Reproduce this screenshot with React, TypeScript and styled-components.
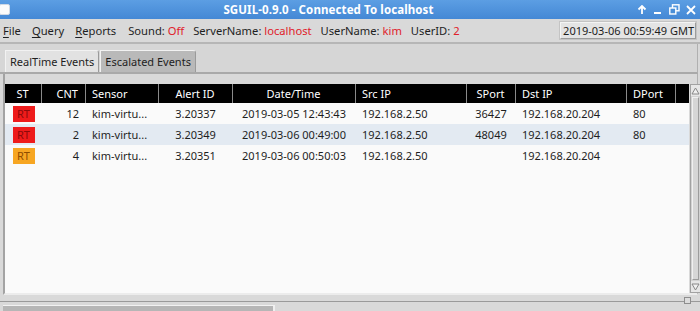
import React from "react";
import styled, { createGlobalStyle } from "styled-components";

const GlobalStyle = createGlobalStyle`
  html, body {
    margin: 0;
    padding: 0;
    background: #d9d9d9;
  }
  * {
    box-sizing: border-box;
  }
`;

interface EventRow {
  status: "red" | "orange";
  cnt: number;
  sensor: string;
  alertId: string;
  date: string;
  srcIp: string;
  sport: string;
  dstIp: string;
  dport: string;
}

const rows: EventRow[] = [
  {
    status: "red",
    cnt: 12,
    sensor: "kim-virtu...",
    alertId: "3.20337",
    date: "2019-03-05 12:43:43",
    srcIp: "192.168.2.50",
    sport: "36427",
    dstIp: "192.168.20.204",
    dport: "80",
  },
  {
    status: "red",
    cnt: 2,
    sensor: "kim-virtu...",
    alertId: "3.20349",
    date: "2019-03-06 00:49:00",
    srcIp: "192.168.2.50",
    sport: "48049",
    dstIp: "192.168.20.204",
    dport: "80",
  },
  {
    status: "orange",
    cnt: 4,
    sensor: "kim-virtu...",
    alertId: "3.20351",
    date: "2019-03-06 00:50:03",
    srcIp: "192.168.2.50",
    sport: "",
    dstIp: "192.168.20.204",
    dport: "",
  },
];

const COLS = "37px 44px 73px 74px 123px 111px 49px 111px 49px 1fr";

const App: React.FC = () => {
  return (
    <>
      <GlobalStyle />
      <Window>
        <TitleBar>
          <WinMenuIcon />
          <Title>SGUIL-0.9.0 - Connected To localhost</Title>
          <Controls>
            <svg width="10" height="10" viewBox="0 0 10 10">
              <path d="M5 1 L5 9 M1.5 4.5 L5 1 L8.5 4.5" stroke="#fff" strokeWidth="1.8" fill="none" />
            </svg>
            <svg width="10" height="10" viewBox="0 0 10 10">
              <rect x="1" y="7" width="7" height="2" fill="#fff" />
            </svg>
            <svg width="11" height="11" viewBox="0 0 11 11">
              <rect x="3.5" y="0.8" width="6.5" height="6" stroke="#fff" strokeWidth="1.4" fill="none" />
              <rect x="0.8" y="4" width="6" height="6" stroke="#fff" strokeWidth="1.4" fill="#4a8fd8" />
            </svg>
            <svg width="10" height="10" viewBox="0 0 10 10">
              <path d="M1 1 L9 9 M9 1 L1 9" stroke="#fff" strokeWidth="1.8" />
            </svg>
          </Controls>
        </TitleBar>

        <MenuBar>
          <MenuItem>
            <u>F</u>ile
          </MenuItem>
          <MenuItem>
            <u>Q</u>uery
          </MenuItem>
          <MenuItem>
            <u>R</u>eports
          </MenuItem>
          <Info>
            Sound: <Red>Off</Red>
          </Info>
          <Info>
            ServerName: <Red>localhost</Red>
          </Info>
          <Info>
            UserName: <Red>kim</Red>
          </Info>
          <Info>
            UserID: <Red>2</Red>
          </Info>
          <Clock>2019-03-06 00:59:49 GMT</Clock>
        </MenuBar>

        <TabBar>
          <Tab $active>RealTime Events</Tab>
          <Tab>Escalated Events</Tab>
        </TabBar>

        <Pane>
          <TableBox>
            <HeaderRow>
              <HeadCell $align="center">ST</HeadCell>
              <HeadCell $align="right">CNT</HeadCell>
              <HeadCell>Sensor</HeadCell>
              <HeadCell $align="center">Alert ID</HeadCell>
              <HeadCell $align="center">Date/Time</HeadCell>
              <HeadCell>Src IP</HeadCell>
              <HeadCell $align="center">SPort</HeadCell>
              <HeadCell>Dst IP</HeadCell>
              <HeadCell>DPort</HeadCell>
              <HeadCell $last />
            </HeaderRow>
            {rows.map((r, i) => (
              <DataRow key={r.alertId} $alt={i % 2 === 1}>
                <Cell $align="center">
                  <Badge $status={r.status}>RT</Badge>
                </Cell>
                <Cell $align="right">{r.cnt}</Cell>
                <Cell>{r.sensor}</Cell>
                <Cell $align="center">{r.alertId}</Cell>
                <Cell $align="center">{r.date}</Cell>
                <Cell>{r.srcIp}</Cell>
                <Cell $align="center">{r.sport}</Cell>
                <Cell>{r.dstIp}</Cell>
                <Cell>{r.dport}</Cell>
                <Cell />
              </DataRow>
            ))}
          </TableBox>
          <ScrollBar>
            <ScrollArrow>
              <svg width="9" height="8" viewBox="0 0 9 8">
                <path d="M4.5 1 L8 7 L1 7 Z" stroke="#888" fill="#f0f0f0" strokeWidth="1" />
              </svg>
            </ScrollArrow>
            <ScrollThumb />
            <ScrollArrow>
              <svg width="9" height="8" viewBox="0 0 9 8">
                <path d="M4.5 7 L8 1 L1 1 Z" stroke="#888" fill="#f0f0f0" strokeWidth="1" />
              </svg>
            </ScrollArrow>
          </ScrollBar>
        </Pane>

        <Sash>
          <SashHandle />
        </Sash>
        <BottomStrip>
          <BottomBar />
        </BottomStrip>
      </Window>
    </>
  );
};

const Window = styled.div`
  width: 700px;
  height: 311px;
  overflow: hidden;
  background: #d9d9d9;
  font-family: "Noto Sans", "DejaVu Sans", sans-serif;
  font-size: 11px;
  color: #1e1e1e;
  display: flex;
  flex-direction: column;
`;

const TitleBar = styled.div`
  height: 19px;
  flex: none;
  display: flex;
  align-items: center;
  background: linear-gradient(#5c9ee3, #4488d5);
  color: #fff;
`;

const WinMenuIcon = styled.div`
  width: 11px;
  height: 11px;
  margin-left: -1px;
  background: #fbfbfb;
  border: 1px solid #cfd8e4;
  border-radius: 2px;
`;

const Title = styled.div`
  flex: 1;
  text-align: center;
  font-weight: 700;
  font-size: 11.5px;
  letter-spacing: 0.1px;
  padding-left: 10px;
`;

const Controls = styled.div`
  display: flex;
  align-items: center;
  gap: 6px;
  padding-right: 4px;
`;

const MenuBar = styled.div`
  height: 25px;
  flex: none;
  display: flex;
  align-items: center;
  padding-left: 3px;
  border-bottom: 2px solid #b6b6b6;
  font-size: 11.2px;
`;

const MenuItem = styled.span`
  margin-right: 11px;
  u {
    text-decoration-thickness: 1px;
    text-underline-offset: 2px;
  }
`;

const Info = styled.span`
  margin-left: 1px;
  margin-right: 8px;
`;

const Red = styled.span`
  color: #e0202a;
`;

const Clock = styled.div`
  margin-left: auto;
  margin-right: 4px;
  height: 17px;
  padding: 0 1px 0 2px;
  display: flex;
  align-items: center;
  background: #e4e4e4;
  border: 1px solid #9c9c9c;
  border-top-color: #f4f4f4;
  border-left-color: #f4f4f4;
  box-shadow: 0 0 0 1px #c4c4c4;
  font-size: 11px;
`;

const TabBar = styled.div`
  height: 30px;
  flex: none;
  display: flex;
  align-items: flex-end;
  padding-left: 5px;
  margin-right: 2px;
  border-right: 1px solid #b0b0b0;
  border-bottom: 2px solid #a9a9a9;
  background: #d6d6d6;
`;

const Tab = styled.div<{ $active?: boolean }>`
  height: 22px;
  display: flex;
  align-items: center;
  padding: 0 4px;
  margin-right: 1px;
  background: ${(p) => (p.$active ? "#e2e2e2" : "#b9b9b9")};
  border: 1px solid #9a9a9a;
  border-bottom: none;
  border-left-color: #f2f2f2;
  border-top-color: #f2f2f2;
  border-radius: 0 3px 0 0;
`;

const Pane = styled.div`
  height: 221px;
  flex: none;
  display: flex;
  margin-left: 3px;
  margin-right: 2px;
  padding-top: 10px;
  border-left: 2px solid #a3a3a3;
  border-right: 1px solid #b0b0b0;
  border-bottom: 2px solid #ececec;
`;

const TableBox = styled.div`
  flex: 1;
  background: #fafafa;
`;

const HeaderRow = styled.div`
  height: 19px;
  display: grid;
  grid-template-columns: ${COLS};
  background: #000;
  color: #fff;
`;

const HeadCell = styled.div<{ $align?: string; $last?: boolean }>`
  display: flex;
  align-items: center;
  justify-content: ${(p) =>
    p.$align === "center" ? "center" : p.$align === "right" ? "flex-end" : "flex-start"};
  padding: 0 7px 0 6px;
  border-right: ${(p) => (p.$last ? "none" : "1px solid #8a8a8a")};
  white-space: nowrap;
`;

const DataRow = styled.div<{ $alt?: boolean }>`
  height: 21px;
  display: grid;
  grid-template-columns: ${COLS};
  background: ${(p) => (p.$alt ? "#e3eaf2" : "transparent")};
`;

const Cell = styled.div<{ $align?: string }>`
  display: flex;
  align-items: center;
  justify-content: ${(p) =>
    p.$align === "center" ? "center" : p.$align === "right" ? "flex-end" : "flex-start"};
  padding: 0 7px 0 6px;
  white-space: nowrap;
  overflow: hidden;
`;

const Badge = styled.span<{ $status: "red" | "orange" }>`
  width: 22px;
  height: 16px;
  display: flex;
  align-items: center;
  justify-content: center;
  margin-left: 1px;
  background: ${(p) => (p.$status === "red" ? "#ee1b1b" : "#f7a622")};
  color: ${(p) => (p.$status === "red" ? "#8c0a0a" : "#8e4c00")};
`;

const ScrollBar = styled.div`
  width: 12px;
  margin-left: 1px;
  margin-right: 1px;
  display: flex;
  flex-direction: column;
  border: 1px solid #a2a2a2;
  background: #d2d2d2;
`;

const ScrollArrow = styled.div`
  height: 11px;
  flex: none;
  display: flex;
  align-items: center;
  justify-content: center;
  background: #e6e6e6;
`;

const ScrollThumb = styled.div`
  flex: 1;
  margin: 1px 1px;
  background: #d6d6d6;
  border: 1px solid #9c9c9c;
  border-top-color: #f0f0f0;
  border-left-color: #f0f0f0;
`;

const Sash = styled.div`
  height: 7px;
  flex: none;
  position: relative;
  border-bottom: 1px solid #9a9a9a;
`;

const SashHandle = styled.div`
  position: absolute;
  right: 9px;
  top: 2px;
  width: 7px;
  height: 7px;
  background: #dcdcdc;
  border: 1px solid #8e8e8e;
`;

const BottomStrip = styled.div`
  flex: 1;
  padding: 3px 0 0 3px;
  display: flex;
`;

const BottomBar = styled.div`
  width: 272px;
  background: #b6b6b6;
  border-top: 1px solid #f2f2f2;
  border-right: 2px solid #efefef;
`;

export default App;
